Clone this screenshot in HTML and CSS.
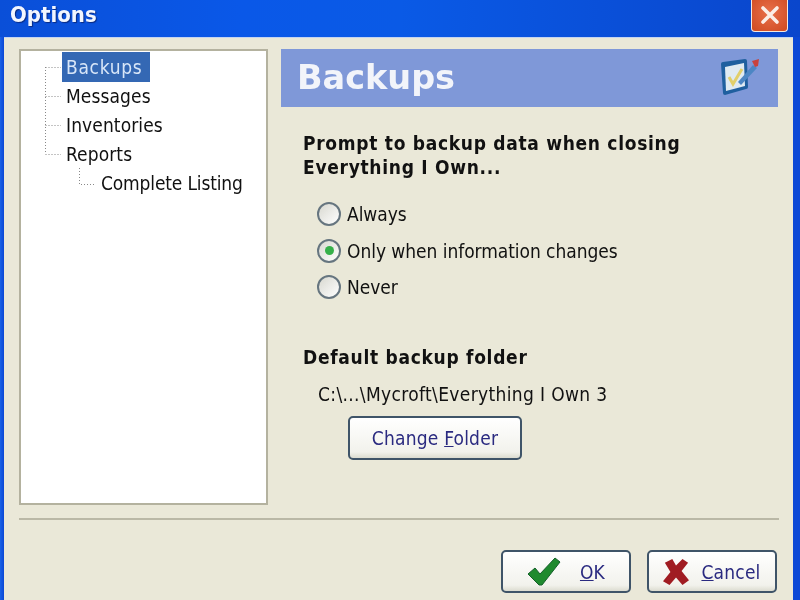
FILE: index.html
```html
<!DOCTYPE html>
<html lang="en">
<head>
<meta charset="utf-8">
<title>Options</title>
<link rel="stylesheet" href="styles.css">
</head>
<body>
<div class="window">
  <header class="titlebar">
    <span class="title">Options</span>
    <button class="close" aria-label="Close">
      <svg width="26" height="26" viewBox="0 0 26 26"><path d="M6 5 L20 19 M20 5 L6 19" stroke="#fbeee6" stroke-width="3.6" stroke-linecap="round"/></svg>
    </button>
  </header>
  <div class="client">
    <div class="main">
      <nav class="tree">
        <svg class="lines" width="80" height="150" viewBox="0 0 80 150">
          <path class="dots" d="M24.500 16 V103 M24.500 16.500 H40 M24.500 45.500 H40 M24.500 74.500 H40 M24.500 103.500 H40"/>
          <path class="dots" d="M58.500 117 V133.500 H75"/>
        </svg>
        <div class="node selected">Backups</div>
        <div class="node">Messages</div>
        <div class="node">Inventories</div>
        <div class="node">Reports</div>
        <div class="node child">Complete Listing</div>
      </nav>
      <section class="pane">
        <div class="banner">
          <h1>Backups</h1>
          <svg class="banner-icon" width="40" height="40" viewBox="0 0 40 40">
            <path d="M1 7 Q1 5 3 5 L25 2 Q27 2 27 4 L28 30 Q28 32 26 32 L5 38 Q3 38 3 36 Z" fill="#1f5f9f"/>
            <path d="M5 10 L24 6 L25 29 L6 34 Z" fill="#dfeaf2"/>
            <path d="M9 20 L13 27 L22 12" fill="none" stroke="#e2cf6a" stroke-width="3"/>
            <path d="M18 25 L33 8 L37 11 L21 28 Z" fill="#4c86c4"/>
            <path d="M32 4 L39 2 L38 9 L35 10 Z" fill="#c8423c"/>
          </svg>
        </div>
        <div class="content">
          <h2 class="heading">Prompt to backup data when closing<br>Everything I Own...</h2>
          <div class="radios">
            <label class="radio"><span class="dot"></span>Always</label>
            <label class="radio"><span class="dot on"></span>Only when information changes</label>
            <label class="radio"><span class="dot"></span>Never</label>
          </div>
          <h2 class="heading folder-heading">Default backup folder</h2>
          <p class="path">C:\...\Mycroft\Everything I Own 3</p>
          <button class="btn change">Change <u>F</u>older</button>
        </div>
      </section>
    </div>
    <hr class="sep">
    <footer class="actions">
      <button class="btn action">
        <svg width="36" height="30" viewBox="0 0 36 30"><path d="M1 17 L8 11 L13 17 L28 1 L33 5 L15 28 L12 28 Z" fill="#1f8a2e" stroke="#14602a" stroke-width="1"/></svg>
        <span class="label ok"><u>O</u>K</span>
      </button>
      <button class="btn action">
        <svg width="26" height="30" viewBox="0 0 28 30"><path d="M2 5 L10 1 L14 8 L21 1 L27 5 L20 14 L28 24 L21 29 L14 21 L7 29 L0 25 L8 15 Z" fill="#a01c22"/></svg>
        <span class="label cancel"><u>C</u>ancel</span>
      </button>
    </footer>
  </div>
</div>
</body>
</html>
```
FILE: styles.css
```css
* { box-sizing: border-box; }
html, body { margin: 0; height: 100%; }
body { width: 800px; height: 600px; overflow: hidden; font-family: "DejaVu Sans Condensed", "DejaVu Sans", sans-serif; background: #0b48d6; }
.window { width: 800px; height: 600px; display: flex; flex-direction: column; background: linear-gradient(90deg, #1a62e6 0, #0b48d6 4px, #0b48d6 100%); filter: blur(0.5px); }
.titlebar { height: 37px; flex: none; display: flex; justify-content: space-between; align-items: flex-start; padding-left: 10px; background: linear-gradient(90deg, #0a4fd8 0, #0a58e8 30%, #0a5ae6 50%, #0a46cc 100%); }
.title { font: bold 22px/30px "DejaVu Sans Condensed", "DejaVu Sans", sans-serif; color: #f2f6ff; text-shadow: 1px 1px 1px #0a2a80; }
.close { width: 37px; height: 32px; margin: 0 12px 0 0; padding: 0; display: flex; align-items: center; justify-content: center; background: radial-gradient(circle at 50% 40%, #e8704a, #cf4a20); border: 1px solid #f4e8e0; border-top: 0; border-radius: 0 0 4px 4px; }
.client { flex: 1; margin: 0 7px 0 4px; padding: 11px 15px 7px 15px; background: #eae8d8; border-top: 1px solid #c4d4f0; display: flex; flex-direction: column; }
.main { display: flex; gap: 13px; height: 456px; flex: none; }
.tree { width: 249px; flex: none; position: relative; background: #fff; border: 2px solid #b4b29f; padding: 1px 0 0 41px; font-size: 19px; color: #111; }
.lines { position: absolute; left: 0; top: 0; }
.dots { fill: none; stroke: #888; stroke-width: 1; stroke-dasharray: 1 2; }
.node { height: 29px; line-height: 29px; width: max-content; padding: 0 4px; letter-spacing: 0.1px; }
.selected { height: 30px; line-height: 30px; background: #3468b4; color: #d8e6f8; padding-right: 8px; letter-spacing: 0.7px; }
.child { margin-left: 35px; letter-spacing: -0.15px; }
.pane { flex: 1; display: flex; flex-direction: column; }
.banner { height: 58px; flex: none; background: #7f98d8; display: flex; justify-content: space-between; align-items: center; padding: 0 18px 0 16px; }
.banner h1 { margin: 0; font: bold 33.500px/1 "DejaVu Sans", sans-serif; color: #f2f4fa; }
.banner-icon { margin-top: -2px; }
.content { padding: 24px 0 0 22px; color: #111; font-size: 19px; }
.heading { margin: 0; font: bold 19px/24px "DejaVu Sans Condensed", sans-serif; letter-spacing: 0.7px; }
.radios { margin: 23px 0 0 14px; display: flex; flex-direction: column; gap: 12.500px; }
.radio { display: flex; align-items: center; gap: 6px; height: 24px; white-space: nowrap; letter-spacing: -0.05px; }
.dot { width: 24px; height: 24px; flex: none; border-radius: 50%; border: 2px solid #66757f; background: linear-gradient(135deg, #d8d8d0, #fff); display: flex; align-items: center; justify-content: center; }
.on::after { content: ""; width: 9px; height: 9px; border-radius: 50%; background: #36b04a; }
.folder-heading { margin-top: 46px; }
.path { margin: 13px 0 0 15px; line-height: 24px; letter-spacing: 0.35px; }
.btn { font-family: "DejaVu Sans Condensed", sans-serif; font-size: 19px; color: #2a2a80; background: linear-gradient(#fff, #f2f2ec 85%, #dcdcd0); border: 2px solid #3f5468; border-radius: 5px; letter-spacing: 0.2px; }
.change { display: block; width: 174px; height: 44px; margin: 10px 0 0 45px; padding: 0; }
.sep { height: 2px; width: 760px; flex: none; margin: 13px 0 0 0; border: 0; background: #bab8a6; }
.actions { flex: 1; display: flex; justify-content: flex-end; align-items: flex-end; gap: 16px; padding-right: 1px; }
.action { width: 130px; height: 43px; display: flex; align-items: center; justify-content: center; gap: 10px; padding: 0; }
.label { white-space: nowrap; }
.ok { margin-left: 7px; }
.cancel { margin-left: 2px; }
```
